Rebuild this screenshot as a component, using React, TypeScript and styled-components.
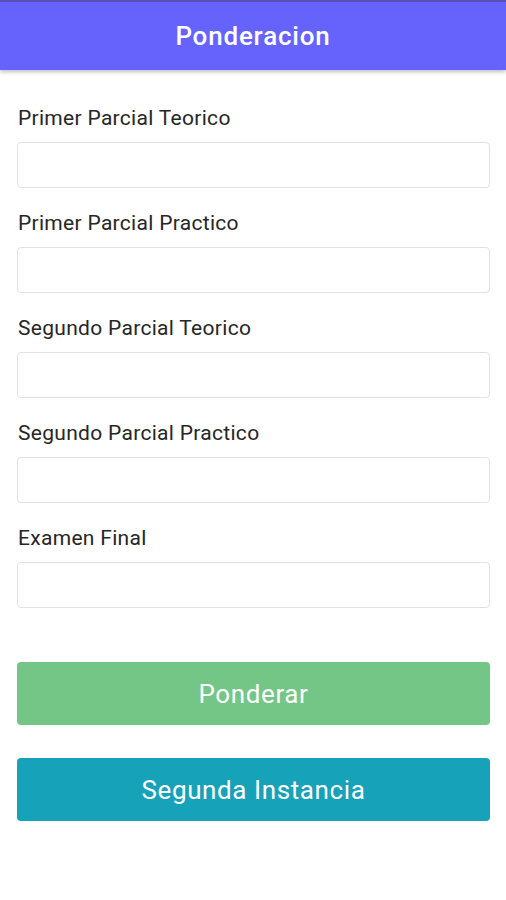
import React from 'react'
import styled, { createGlobalStyle } from 'styled-components'

const GlobalStyle = createGlobalStyle`
  body {
    margin: 0;
    background: #fff;
    font-family: Roboto, "Liberation Sans", sans-serif;
  }
`

const Header = styled.header`
  height: 68px;
  border-top: 2px solid #574fb5;
  background: #6663fd;
  box-shadow: 0 2px 4px rgba(0, 0, 0, 0.25);
  display: flex;
  align-items: center;
  justify-content: center;
  color: #fff;
  font-size: 26px;
  letter-spacing: 0.8px;
  font-weight: 500;
`

const Form = styled.main`
  padding: 37px 16px 0 17px;
  display: flex;
  flex-direction: column;
`

const Field = styled.div`
  display: flex;
  flex-direction: column;
  margin-bottom: 24px;
`

const Label = styled.label`
  font-size: 21px;
  line-height: 23px;
  letter-spacing: 0.3px;
  color: #262626;
  padding-left: 1px;
  margin-bottom: 12px;
`

const Input = styled.input`
  box-sizing: border-box;
  height: 46px;
  width: 100%;
  border: 1px solid #e2e2e2;
  border-radius: 4px;
  background: #fff;
  font-size: 18px;
  font-family: inherit;
  padding: 0 12px;
  outline: none;
`

const Button = styled.button<{ $bg: string }>`
  height: 63px;
  width: 100%;
  border: none;
  border-radius: 4px;
  background: ${p => p.$bg};
  color: #fff;
  font-family: inherit;
  font-size: 26px;
  letter-spacing: 0.6px;
  margin-top: 30px;
  & + & {
    margin-top: 33px;
  }
`

const fields = [
  'Primer Parcial Teorico',
  'Primer Parcial Practico',
  'Segundo Parcial Teorico',
  'Segundo Parcial Practico',
  'Examen Final',
]

export default function App() {
  return (
    <>
      <GlobalStyle />
      <Header>Ponderacion</Header>
      <Form>
        {fields.map(f => (
          <Field key={f}>
            <Label>{f}</Label>
            <Input />
          </Field>
        ))}
        <Button $bg="#74c686">Ponderar</Button>
        <Button $bg="#16a2b8">Segunda Instancia</Button>
      </Form>
    </>
  )
}
